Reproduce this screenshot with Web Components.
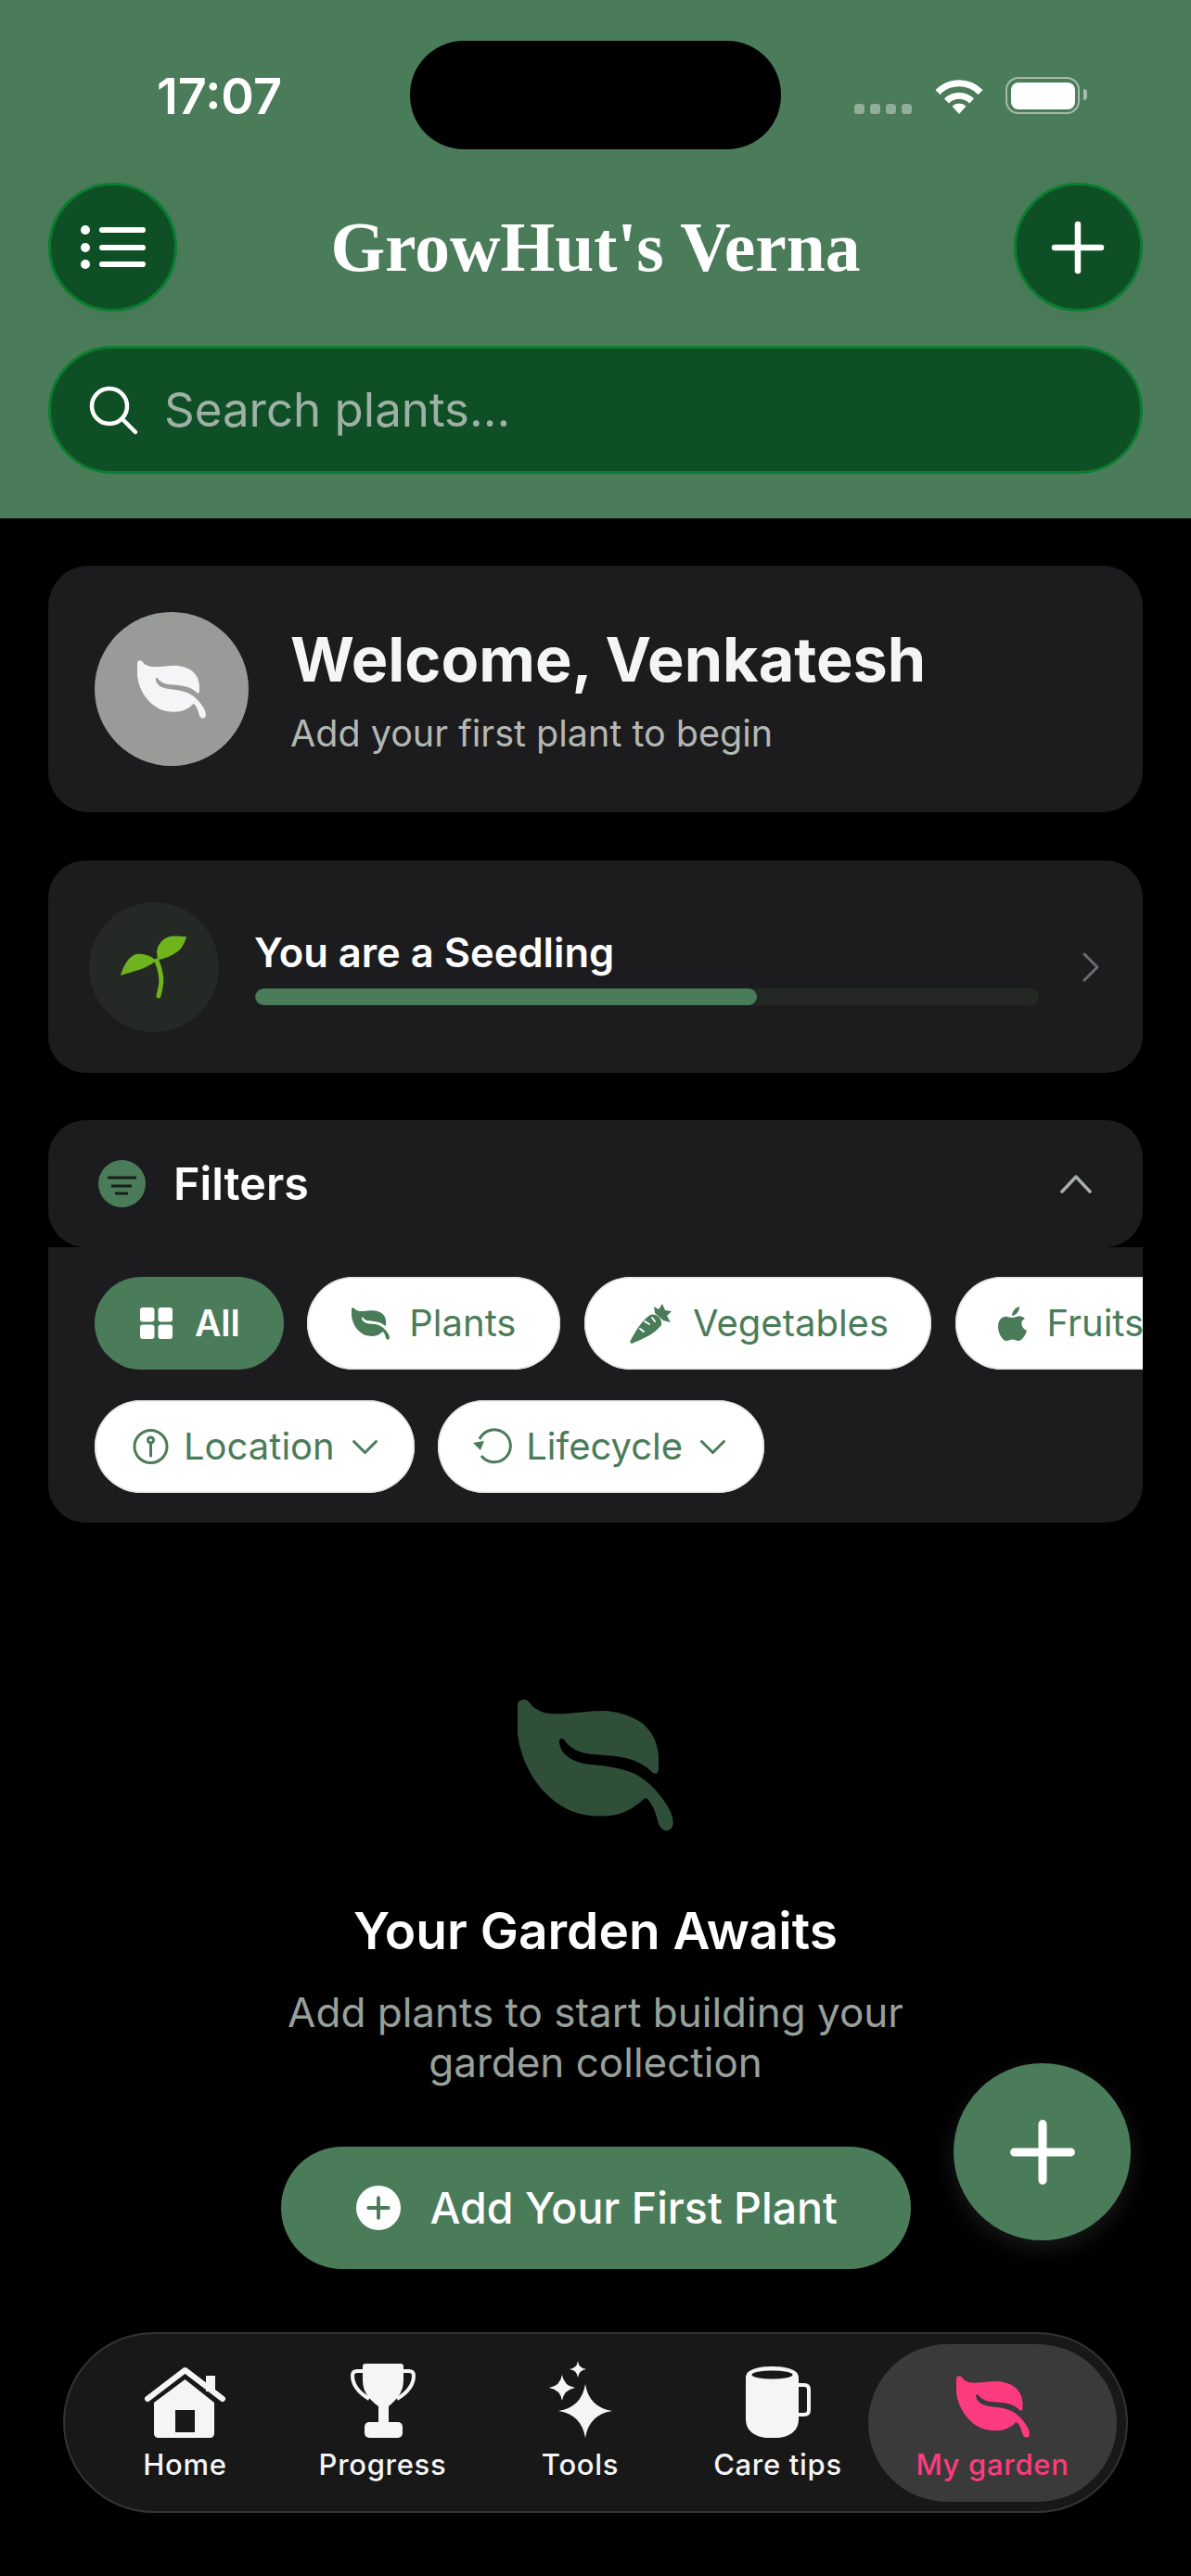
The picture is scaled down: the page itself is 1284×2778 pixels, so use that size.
<!DOCTYPE html>
<html lang="en">
<head>
<meta charset="utf-8">
<title>GrowHut's Verna</title>
<style>
    html, body { margin: 0; padding: 0; background: #000; }
    body { font-family: Inter, "Liberation Sans", sans-serif; color: #fff; }
</style>
</head>
<body>
<garden-app>
    <app-header title-text="GrowHut's Verna"></app-header>
    <garden-main>
        <welcome-card name="Welcome, Venkatesh" note="Add your first plant to begin"></welcome-card>
        <level-card label="You are a Seedling"></level-card>
        <filter-panel>
            <filter-chip active icon="grid" iw="35" ih="34" style="--pl:49px;--pr:47px;--gap:24px">All</filter-chip>
            <filter-chip icon="leaf" iw="41" ih="35" style="--pl:48px;--pr:48px;--gap:21px">Plants</filter-chip>
            <filter-chip icon="carrot" iw="45" ih="43" style="--pl:49px;--pr:46px;--gap:23px">Vegetables</filter-chip>
            <filter-chip icon="apple" iw="31" ih="37" style="--pl:46px;--pr:46px;--gap:22px">Fruits</filter-chip>
            <filter-chip slot="second" dropdown icon="pin" iw="39" ih="38" style="--pl:41px;--pr:40px;--gap:16px">Location</filter-chip>
            <filter-chip slot="second" dropdown icon="cycle" iw="41" ih="38" style="--pl:38px;--pr:42px;--gap:16px">Lifecycle</filter-chip>
        </filter-panel>
        <empty-garden></empty-garden>
    </garden-main>
    <fab-button></fab-button>
    <tab-bar>
        <tab-item icon="home" iw="87" ih="76">Home</tab-item>
        <tab-item icon="trophy" iw="70" ih="80">Progress</tab-item>
        <tab-item icon="sparkles" iw="68" ih="83">Tools</tab-item>
        <tab-item icon="mug" iw="70" ih="77">Care tips</tab-item>
        <tab-item icon="leaf" iw="79" ih="67" active>My garden</tab-item>
    </tab-bar>
</garden-app>

<script>
const LEAF = 'M7 .7C13 .7 14 8 20 11C28 16 38 17 52 16C66 15 78 13 92 13C106 13 122 18 134 26C146 36 151 48 152 62L152 76C152 81 148 82 145 79C138 72 128 66 112 63C96 60 82 61 70 58C60 55 54 50 50 44C48 42 44 43 45 47C46 56 52 62 60 66C70 71 84 71 98 73C114 76 126 79 136 87C148 96 158 108 165 122C169 132 169 140 162 142C157 143 154 139 152 135C150 127 147 117 143 112C141 108 138 106 136 108C128 116 118 122 106 125C94 127 84 127 72 125C54 122 36 110 24 95C10 78 2 56 0 38L0 8C0 3 3 .7 7 .7Z';

// every icon is viewBox + inner markup, coloured through currentColor
const ICONS = {
    leaf: ['0 0 168 143', `<path fill="currentColor" d="${LEAF}"/>`],
    menu: ['0 0 70 47', `<g fill="#fff"><circle cx="5" cy="5" r="5"/><circle cx="5" cy="24" r="5"/><circle cx="5" cy="42" r="5"/></g>
        <path stroke="#fff" stroke-width="6" stroke-linecap="round" d="M23 5H67M23 24H67M23 42H67"/>`],
    plus: ['0 0 56 56', `<path stroke="currentColor" style="stroke-width:var(--sw,6.500px)" stroke-linecap="round" d="M28 3V53M3 28H53"/>`],
    search: ['0 0 52 52', `<circle cx="22" cy="22" r="19" fill="none" stroke="#fff" stroke-width="4.5"/><path stroke="#fff" stroke-width="4.5" stroke-linecap="round" d="M36 36L50 50"/>`],
    sprout: ['0 0 74 67', `<g fill="#6fb31d"><path d="M72 1C65 1 60 0 54 1C46 3 41 10 40 17L41 26C50 25 60 20 66 14C69 10 71 5 72 1Z"/>
        <path d="M39 27C35 22 26 19 18 20C10 22 4 32 1 43C8 40 20 38 28 34C33 32 37 29 39 27Z"/></g>
        <path fill="none" stroke="#6fb31d" stroke-width="5" stroke-linecap="round" d="M40 27C44 37 46 48 44 56L42 65"/>`],
    chevronRight: ['0 0 18 32', `<path fill="none" stroke="#6c6c70" stroke-width="3" stroke-linecap="round" stroke-linejoin="round" d="M2 2L16 16L2 30"/>`],
    chevronUp: ['0 0 34 20', `<path fill="none" stroke="#a9aeab" stroke-width="3.5" stroke-linecap="round" stroke-linejoin="round" d="M2 18L17 2L32 18"/>`],
    chevronDown: ['0 0 27 15', `<path fill="none" stroke="currentColor" stroke-width="3" stroke-linecap="round" stroke-linejoin="round" d="M1.5 1.5L13.5 13.5L25.5 1.5"/>`],
    filter: ['0 0 51 51', `<circle cx="25.5" cy="25.5" r="25.5" fill="#4a7c59"/><path stroke="#1c1c1e" stroke-width="3.2" d="M10 19H41M14 28H36M18 36H32"/>`],
    grid: ['0 0 35 34', `<g fill="currentColor"><rect width="15.5" height="15.5" rx="3"/><rect x="19.5" width="15.5" height="15.5" rx="3"/><rect y="18.5" width="15.5" height="15.5" rx="3"/><rect x="19.5" y="18.5" width="15.5" height="15.5" rx="3"/></g>`],
    carrot: ['0 0 45 43', `<path fill="currentColor" d="M2 43C0 42 0 41 1 39C7 28 13 18 22 12C29 10 35 16 34 23C26 33 14 38 2 43Z"/>
        <path fill="currentColor" d="M27 10L26 3L31 6L35 0L38 7L45 8L40 13L44 20L36 18Z"/>
        <path stroke="#fff" stroke-width="2" stroke-linecap="round" d="M16 19L21 22M11 27L15 30M24 15L27 19"/>`],
    apple: ['0 0 31 37', `<path fill="currentColor" d="M15.5 12C12 12 9 10 7 11C2 12 0 17 0 22C0 29 5 37 9 37C11 37 13 35.5 15.5 35.5C18 35.5 20 37 22 37C26 37 30 30 31 26C27 24 25 21 25.5 17C26 15 27 14 29 13C27 11 24 10 22 10.5C19 11 17 12 15.5 12Z"/><path fill="currentColor" d="M15 10C15 5 19 1 23 0C23 5 20 9 15 10Z"/>`],
    pin: ['0 0 39 38', `<g fill="none" stroke="currentColor" stroke-width="3"><circle cx="19.5" cy="19" r="17.5"/><circle cx="19.5" cy="12" r="3"/><path stroke-linecap="round" d="M19.5 15V29"/></g>`],
    cycle: ['0 0 41 38', `<path fill="none" stroke="currentColor" stroke-width="3" d="M7 11A17.5 17.5 0 1 1 9 29"/><path fill="currentColor" d="M0 15L12 13L8 23Z"/>`],
    home: ['0 0 87 76', `<path fill="none" stroke="currentColor" stroke-width="6" stroke-linecap="round" stroke-linejoin="round" d="M3 34L43.500 3L84 34"/>
        <rect x="66" y="9" width="10" height="17" fill="currentColor"/>
        <path fill="currentColor" fill-rule="evenodd" d="M43.500 13L75 38V71Q75 76 70 76H15Q10 76 10 71V38ZM33 46V70H54V46Z"/>`],
    trophy: ['0 0 70 80', `<path fill="currentColor" d="M13 3Q13 0 16 0H54Q57 0 57 3V18C57 32 48 40 41 46V63H30V46C22 40 13 32 13 18Z"/>
        <rect x="15" y="63" width="41" height="17" rx="5" fill="currentColor"/>
        <path fill="none" stroke="currentColor" stroke-width="4" d="M14 8H7Q2 8 2 13C2 24 10 32 20 38M56 8H63Q68 8 68 13C68 24 60 32 50 38"/>`],
    sparkles: ['0 0 68 83', `<g fill="currentColor"><path d="M39 25Q43 50 68 54Q43 58 39 83Q35 58 10 54Q35 50 39 25Z"/><path d="M14 15Q16 27 28 29Q16 31 14 43Q12 31 0 29Q12 27 14 15Z"/><path d="M31 0Q32 8 40 9Q32 10 31 18Q30 10 22 9Q30 8 31 0Z"/></g>`],
    mug: ['0 0 70 77', `<path fill="currentColor" d="M0 12C0 3 14 0 28 0C43 0 57 3 57 12V57C57 70 46 77 32 77H25C11 77 0 70 0 57Z"/>
        <ellipse cx="28.500" cy="9" rx="22" ry="4.500" fill="#181818"/>
        <path fill="none" stroke="currentColor" stroke-width="4" d="M57 20H63Q68 20 68 25V47Q68 52 63 52H57"/>`],
    wifi: ['0 0 54 39', `<g fill="none" stroke="#fff" stroke-width="7"><path d="M4 15.500A32 32 0 0 1 50 15.500"/><path d="M13.500 25A19 19 0 0 1 40.500 25"/></g><path fill="#fff" d="M27 39L19.500 30.500A11 11 0 0 1 34.500 30.500Z"/>`]
};

class GhIcon extends HTMLElement {
    connectedCallback() {
        const [box, inner] = ICONS[this.getAttribute('name')];
        const w = this.getAttribute('w'), h = this.getAttribute('h');
        this.attachShadow({ mode: 'open' }).innerHTML = `
            <style>
                :host { display: block; flex: none; width: ${w}px; height: ${h}px; }
                svg { display: block; width: 100%; height: 100%; overflow: visible; }
            </style>
            <svg viewBox="${box}" preserveAspectRatio="none">${inner}</svg>`;
    }
}
customElements.define('gh-icon', GhIcon);

class GardenApp extends HTMLElement {
    connectedCallback() {
        this.attachShadow({ mode: 'open' }).innerHTML = `
            <style>
                :host { display: block; position: relative; width: 1284px; height: 2778px; overflow: hidden; background: #000; }
            </style>
            <slot></slot>`;
    }
}
customElements.define('garden-app', GardenApp);

class StatusBar extends HTMLElement {
    connectedCallback() {
        this.attachShadow({ mode: 'open' }).innerHTML = `
            <style>
                :host { display: grid; grid-template-columns: 1fr 400px 1fr; height: 117px; margin: 0 -52px; }
                .time { padding: 30px 0 0 169px; font: 600 54px/60px Inter, sans-serif; color: #fff; }
                .island { background: #000; border-radius: 58px; }
                .right { display: flex; align-items: flex-start; padding: 40px 0 0 79px; }
                .dots { display: flex; gap: 6px; margin: 28px 24px 0 0; }
                .dots i { width: 11px; height: 10.500px; border-radius: 3.500px; background: #92ad9a; }
                .batt { position: relative; width: 80px; height: 40px; margin: -1px 0 0 23px; box-sizing: border-box; border: 2.500px solid #a8baaf; border-radius: 14px; padding: 3.500px; }
                .batt b { display: block; height: 100%; background: #fff; border-radius: 8px; }
                .batt::after { content: ""; position: absolute; right: -9.500px; top: 11px; width: 4px; height: 12px; border-radius: 0 6px 6px 0; background: #a8baaf; }
            </style>
            <div class="time">17:07</div>
            <div class="island"></div>
            <div class="right">
                <div class="dots"><i></i><i></i><i></i><i></i></div>
                <gh-icon name="wifi" w="54" h="39"></gh-icon>
                <div class="batt"><b></b></div>
            </div>`;
    }
}
customElements.define('status-bar', StatusBar);

class RoundButton extends HTMLElement {
    connectedCallback() {
        this.attachShadow({ mode: 'open' }).innerHTML = `
            <style>
                :host { display: flex; align-items: center; justify-content: center; flex: none; box-sizing: border-box;
                    width: 139px; height: 139px; border-radius: 50%; background: #0f4f25; border: 3px solid #0a7d30; color: #fff;
                    box-shadow: 0 6px 36px rgba(0,0,0,.03); }
            </style>
            <slot></slot>`;
    }
}
customElements.define('round-button', RoundButton);

class SearchBox extends HTMLElement {
    connectedCallback() {
        this.attachShadow({ mode: 'open' }).innerHTML = `
            <style>
                :host { display: flex; align-items: center; box-sizing: border-box; height: 138px; margin-top: 37px; padding-left: 41px;
                    border-radius: 69px; background: #0f4f25; border: 3px solid #0a7d30; }
                span { margin-left: 29px; font: 400 51px/60px Inter, sans-serif; color: #9fb0a5; }
            </style>
            <gh-icon name="search" w="52" h="52"></gh-icon>
            <span>Search plants...</span>`;
    }
}
customElements.define('search-box', SearchBox);

class AppHeader extends HTMLElement {
    connectedCallback() {
        this.attachShadow({ mode: 'open' }).innerHTML = `
            <style>
                :host { display: block; box-sizing: border-box; height: 559px; padding: 44px 52px 0; background: #4a7c59; }
                .bar { display: flex; align-items: center; justify-content: space-between; margin-top: 36px; }
                h1 { margin: 0; font: 700 75.500px/80px "Liberation Serif", serif; color: #fff; }
            </style>
            <status-bar></status-bar>
            <div class="bar">
                <round-button><gh-icon name="menu" w="70" h="47"></gh-icon></round-button>
                <h1>${this.getAttribute('title-text')}</h1>
                <round-button><gh-icon name="plus" w="56" h="56"></gh-icon></round-button>
            </div>
            <search-box></search-box>`;
    }
}
customElements.define('app-header', AppHeader);

class GardenMain extends HTMLElement {
    connectedCallback() {
        this.attachShadow({ mode: 'open' }).innerHTML = `
            <style>
                :host { display: flex; flex-direction: column; padding: 51px 52px 0; }
            </style>
            <slot></slot>`;
    }
}
customElements.define('garden-main', GardenMain);

class WelcomeCard extends HTMLElement {
    connectedCallback() {
        this.attachShadow({ mode: 'open' }).innerHTML = `
            <style>
                :host { display: flex; align-items: center; box-sizing: border-box; height: 266px; padding-left: 50px; background: #1c1c1e; border-radius: 44px; }
                .avatar { display: flex; align-items: center; justify-content: center; width: 166px; height: 166px; border-radius: 50%; background: #999b99; color: #f4f5f6; margin-right: 45px; }
                h2 { margin: 0; font: 700 66.500px/80px Inter, sans-serif; color: #f4f5f6; }
                p { margin: 15px 0 0; font: 400 39.500px/50px Inter, sans-serif; color: #b3b8b4; }
            </style>
            <div class="avatar"><gh-icon name="leaf" w="74" h="63"></gh-icon></div>
            <div>
                <h2>${this.getAttribute('name')}</h2>
                <p>${this.getAttribute('note')}</p>
            </div>`;
    }
}
customElements.define('welcome-card', WelcomeCard);

class LevelCard extends HTMLElement {
    connectedCallback() {
        this.attachShadow({ mode: 'open' }).innerHTML = `
            <style>
                :host { display: flex; align-items: center; box-sizing: border-box; height: 229px; margin-top: 52px; padding-left: 44px; background: #1c1c1e; border-radius: 40px; }
                .badge { display: flex; align-items: center; justify-content: center; width: 140px; height: 140px; border-radius: 50%; background: #242925; margin-right: 39px; flex: none; }
                .mid { width: 845px; flex: none; }
                .label { margin-left: -1px; font: 600 43.500px/50px Inter, sans-serif; color: #fff; }
                .track { height: 18px; margin-top: 14px; border-radius: 9px; background: #242824; overflow: hidden; }
                .fill { width: 541px; height: 100%; border-radius: 9px; background: #4a7c59; }
                gh-icon { margin-left: 47px; }
            </style>
            <div class="badge"><gh-icon style="margin:0" name="sprout" w="74" h="67"></gh-icon></div>
            <div class="mid">
                <div class="label">${this.getAttribute('label')}</div>
                <div class="track"><div class="fill"></div></div>
            </div>
            <gh-icon name="chevronRight" w="18" h="32"></gh-icon>`;
    }
}
customElements.define('level-card', LevelCard);

class FilterChip extends HTMLElement {
    connectedCallback() {
        const active = this.hasAttribute('active');
        this.attachShadow({ mode: 'open' }).innerHTML = `
            <style>
                :host { display: flex; align-items: center; flex: none; box-sizing: border-box; height: 100px; border-radius: 50px;
                    padding: 0 var(--pr) 0 var(--pl); gap: var(--gap); background: ${active ? '#4a7c59' : '#fff'};
                    box-shadow: ${active ? 'none' : 'inset 0 0 0 1.500px #dfe5e1'};
                    color: ${active ? '#fff' : '#4a7c59'}; font: ${active ? '600 39px' : '400 40px'}/50px Inter, sans-serif; }
                .down { margin-left: 3px; }
            </style>
            <gh-icon name="${this.getAttribute('icon')}" w="${this.getAttribute('iw')}" h="${this.getAttribute('ih')}"></gh-icon>
            <slot></slot>
            ${this.hasAttribute('dropdown') ? '<gh-icon class="down" name="chevronDown" w="27" h="15"></gh-icon>' : ''}`;
    }
}
customElements.define('filter-chip', FilterChip);

class FilterPanel extends HTMLElement {
    connectedCallback() {
        this.attachShadow({ mode: 'open' }).innerHTML = `
            <style>
                :host { display: block; margin-top: 51px; }
                .head { display: flex; align-items: center; box-sizing: border-box; height: 137px; padding: 0 55px 0 54px; background: #1c1c1e; border-radius: 40px; }
                .head span { margin-left: 30px; flex: 1; font: 600 48.500px/54px Inter, sans-serif; color: #fff; }
                .body { box-sizing: border-box; height: 297px; padding: 32px 0 0 50px; background: #1c1c1e; border-radius: 0 0 40px 40px; overflow: hidden; }
                .row { display: flex; gap: 25.500px; }
                .row + .row { margin-top: 33px; }
            </style>
            <div class="head">
                <gh-icon name="filter" w="51" h="51"></gh-icon>
                <span>Filters</span>
                <gh-icon name="chevronUp" w="34" h="20"></gh-icon>
            </div>
            <div class="body">
                <div class="row"><slot></slot></div>
                <div class="row"><slot name="second"></slot></div>
            </div>`;
    }
}
customElements.define('filter-panel', FilterPanel);

class EmptyGarden extends HTMLElement {
    connectedCallback() {
        this.attachShadow({ mode: 'open' }).innerHTML = `
            <style>
                :host { display: flex; flex-direction: column; align-items: center; margin-top: 190px; text-align: center; }
                .leaf { color: #2f4f38; }
                h3 { margin: 75px 0 0; font: 600 55px/64px Inter, sans-serif; color: #fff; }
                p { margin: 29px 0 0; font: 400 44px/54px Inter, sans-serif; color: #98a09b; }
                .add { display: flex; align-items: center; box-sizing: border-box; width: 679px; height: 132px; margin-top: 64px; padding-left: 81px; border-radius: 66px; background: #4a7c59; color: #fff; font: 500 46.500px/60px Inter, sans-serif; }
                .dot { display: flex; align-items: center; justify-content: center; width: 48px; height: 48px; margin-right: 32px; border-radius: 50%; background: #fff; color: #4a7c59; --sw: 9px; }
            </style>
            <gh-icon class="leaf" name="leaf" w="168" h="143"></gh-icon>
            <h3>Your Garden Awaits</h3>
            <p>Add plants to start building your<br>garden collection</p>
            <div class="add"><span class="dot"><gh-icon name="plus" w="24" h="24"></gh-icon></span>Add Your First Plant</div>`;
    }
}
customElements.define('empty-garden', EmptyGarden);

class FabButton extends HTMLElement {
    connectedCallback() {
        this.attachShadow({ mode: 'open' }).innerHTML = `
            <style>
                :host { position: absolute; left: 1028px; top: 2225px; display: flex; align-items: center; justify-content: center;
                    width: 191px; height: 191px; border-radius: 50%; background: #4a7c59; color: #fff; --sw: 7.500px;
                    box-shadow: 0 8px 24px rgba(255,255,255,.1); }
            </style>
            <gh-icon name="plus" w="68" h="68"></gh-icon>`;
    }
}
customElements.define('fab-button', FabButton);

class TabItem extends HTMLElement {
    connectedCallback() {
        const active = this.hasAttribute('active');
        this.attachShadow({ mode: 'open' }).innerHTML = `
            <style>
                :host { display: flex; flex-direction: column; align-items: center; justify-content: flex-end; box-sizing: border-box; flex: none;
                    width: ${active ? 268 : 195}px; height: 170px; padding-bottom: 21px; border-radius: 85px;
                    margin-left: ${active ? -18 : 0}px; background: ${active ? '#3a3a3a' : 'transparent'}; color: ${active ? '#ff3b7f' : '#f4f5f6'};
                    font: 500 31px/38px Inter, sans-serif; letter-spacing: .7px; }
                .ico { flex: 1; display: flex; align-items: flex-end; padding-bottom: 10px; }
            </style>
            <div class="ico"><gh-icon name="${this.getAttribute('icon')}" w="${this.getAttribute('iw')}" h="${this.getAttribute('ih')}"></gh-icon></div>
            <slot></slot>`;
    }
}
customElements.define('tab-item', TabItem);

class TabBar extends HTMLElement {
    connectedCallback() {
        this.attachShadow({ mode: 'open' }).innerHTML = `
            <style>
                :host { position: absolute; left: 68px; top: 2515px; display: flex; align-items: center; gap: 18px; box-sizing: border-box;
                    width: 1148px; height: 195px; padding-left: 32px; border-radius: 98px; background: #181818; border: 2px solid #333; }
            </style>
            <slot></slot>`;
    }
}
customElements.define('tab-bar', TabBar);
</script>
</body>
</html>
